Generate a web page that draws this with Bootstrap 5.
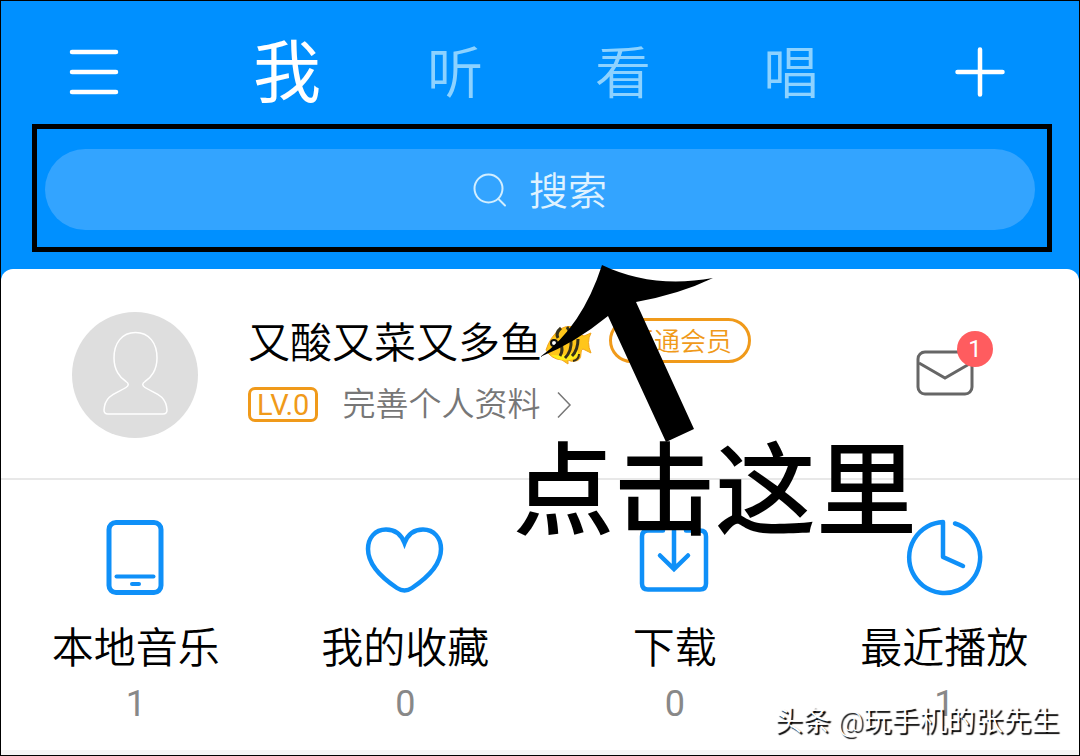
<!DOCTYPE html>
<html lang="zh-CN">
<head>
<meta charset="utf-8">
<meta name="viewport" content="width=device-width, initial-scale=1">
<title>我的音乐</title>
<link href="https://cdn.jsdelivr.net/npm/bootstrap@5.3.0/dist/css/bootstrap.min.css" rel="stylesheet">
<style>
  body { font-family: Roboto, "Noto Sans CJK SC", sans-serif; font-weight: 350; background: #fff; color: #000; }
  a { color: inherit; text-decoration: none; }
  svg { display: block; flex: none; }
  .app { min-height: 100vh; border: 1px solid #000; background: #0090ff; }
  .topbar { height: 123px; padding: 20px 49px 0 43px; }
  .icon-btn { width: 100px; height: 70px; border: 0; background: none; padding: 0; }
  .tabs { padding: 13px 0 0 4px; }
  .tab { width: 168px; line-height: 80px; font-size: 56px; color: #8dd2ff; text-align: center; }
  .tab.on { font-size: 68px; font-weight: 400; color: #fff; }
  .search-frame { margin: 0 27px 0 31px; border: 5px solid #000; padding: 20px 12px 17px 8px; }
  .search-pill { height: 81px; border: 0; border-radius: 41px; background: #33a4ff; color: #dff2ff; font-size: 39px; font-weight: 350; line-height: 1; gap: 22px; }
  .search-pill span { padding-top: 5px; }
  .sheet { margin-top: 17px; border-radius: 12px 12px 0 0; background: #fff; }
  .profile { height: 209px; padding: 2px 105px 0 71px; gap: 50px; }
  .nick { font-size: 42px; line-height: 54px; gap: 3px; margin-top: -6px; }
  .vip { height: 45px; margin: -6px 0 0 13px; padding: 2px 16px 0; border: 3px solid #f09a1a; border-radius: 23px; color: #f09a1a; background: #fff; font-size: 26px; font-weight: 350; line-height: 38px; }
  .level { height: 35px; padding: 0 6px; border: 3px solid #f09a1a; border-radius: 7px; color: #f09a1a; font-size: 29px; font-weight: 400; line-height: 31px; }
  .info { margin-top: 12px; }
  .more { font-size: 33px; line-height: 44px; color: #777; gap: 16px; }
  .mail { margin-top: -4px; }
  .mail-count { top: -19px; left: 41px; width: 36px; height: 36px; border-radius: 50%; background: #ff5c5f; color: #fff; font-size: 24px; font-weight: 400; line-height: 37px; text-align: center; }
  .shelf { border-top: 2px solid #e8e8e8; padding-top: 37px; }
  .shelf-name { font-size: 42px; line-height: 60px; margin-top: 22px; }
  .shelf-num { font-size: 36px; line-height: 50px; color: #888; font-weight: 400; }
  .foot { height: 5px; background: #f5f5f5; }
  .arrow { top: 264px; left: 50%; pointer-events: none; }
  .callout { top: 433px; left: 47.5%; font-size: 101px; font-weight: 500; line-height: 118px; white-space: nowrap; pointer-events: none; }
  .credit { right: 20px; bottom: 14px; font-size: 28px; line-height: 38px; color: #fff; text-shadow: 2px 2px 1px #000; white-space: nowrap; pointer-events: none; }
</style>
</head>
<body>
<div class="app position-relative overflow-hidden d-flex flex-column">
  <header class="topbar d-flex justify-content-between align-items-start">
    <button class="icon-btn mt-3 d-flex align-items-center justify-content-center" aria-label="菜单">
      <svg width="50" height="46" viewBox="0 0 50 46" stroke="#fff" stroke-width="4.500" stroke-linecap="round"><path d="M3 3h44M3 23h44M3 43h44"/></svg>
    </button>
    <nav class="tabs d-flex" aria-label="主导航">
      <a class="tab on" href="#me">我</a><a class="tab" href="#listen">听</a><a class="tab" href="#watch">看</a><a class="tab" href="#sing">唱</a>
    </nav>
    <button class="icon-btn mt-3 d-flex align-items-center justify-content-center" aria-label="添加">
      <svg width="50" height="50" viewBox="0 0 50 50" stroke="#fff" stroke-width="4.500" stroke-linecap="round"><path d="M2.500 25h45M25 2.500v45"/></svg>
    </button>
  </header>

  <div class="search-frame">
    <button class="search-pill w-100 d-flex align-items-center justify-content-center">
      <svg width="34" height="34" viewBox="0 0 34 34" fill="none" stroke="#d2eeff" stroke-width="2" stroke-linecap="round"><circle cx="15.500" cy="15.500" r="14"/><path d="M25.500 26l6.500 6.500"/></svg>
      <span>搜索</span>
    </button>
  </div>

  <main class="sheet flex-grow-1 d-flex flex-column">
    <section class="profile d-flex align-items-center">
      <svg width="126" height="126" viewBox="0 0 126 126" fill="none"><circle cx="63" cy="63" r="63" fill="#dedede"/><path d="M63.500 20.500C50 20.500 42 31 42 46c0 12 6 20 12 23.500 3 2 3 4 0 6C46 81 33 82 32 98c0 3 1 4 4 4h55c3 0 4-1 4-4-1-16-14-17-22-22.500-3-2-3-4 0-6C79 66 85 58 85 46 85 31 77 20.500 63.500 20.500z" stroke="#fff" stroke-width="1.500"/></svg>
      <div class="flex-grow-1">
        <div class="nick d-flex align-items-center">
          <span>又酸又菜又多鱼</span>
          <svg width="48" height="42" viewBox="0 0 48 42"><path d="M1 27Q5 14 15 6 28-1 35 10q2 3 4 3l7-3q-5 9 0 20l-8-4q-2 0-2 4 0 8-6 8-4 1-7-1l0 4-6-4Q6 36 1 27z" fill="#ffc61a" stroke="#f2a51d"/><path d="M6 32q10 8 22 4 6-2 5-8-10 5-27 4z" fill="#ffee1a"/><path d="M16 5q-6 5-3 10M22 4q5 6-1 13M29 5q2 5 0 8M15 19q4 8 0 14M26 17q1 11-6 18M33 16q0 11-6 17" fill="none" stroke="#35301a" stroke-width="3"/><path d="M34 31q0 6-6 7" fill="none" stroke="#35301a" stroke-width="2"/><circle cx="9" cy="20" r="3" fill="#fff" stroke="#111" stroke-width="2"/></svg>
          <button class="vip">开通会员</button>
        </div>
        <div class="info d-flex align-items-center">
          <span class="level">LV.0</span>
          <a class="more d-flex align-items-center ms-4" href="#profile">完善个人资料
            <svg width="16" height="28" viewBox="0 0 16 28" fill="none" stroke="#777" stroke-width="1.500"><path d="M2 1.500l12 12.500L2 26.500"/></svg></a>
        </div>
      </div>
      <a class="mail position-relative" href="#mail" aria-label="消息">
        <svg width="58" height="46" viewBox="0 0 58 46" fill="none" stroke="#666" stroke-width="3"><rect x="2" y="2" width="54" height="42" rx="7"/><path d="M3 13l26 15 26-15"/></svg>
        <span class="mail-count position-absolute">1</span>
      </a>
    </section>

    <section class="shelf row g-0 text-center flex-grow-1">
      <a class="col-3" href="#local">
        <svg class="mx-auto" width="80" height="80" viewBox="0 0 80 80" fill="none" stroke="#0f90f8" stroke-width="5" stroke-linecap="round"><rect x="13" y="5.500" width="52" height="70" rx="7"/><path d="M20.500 59.500h37" stroke-width="4"/><path d="M36 67h7" stroke-width="4"/></svg>
        <div class="shelf-name">本地音乐</div><div class="shelf-num">1</div>
      </a>
      <a class="col-3" href="#liked">
        <svg class="mx-auto" width="80" height="80" viewBox="0 0 80 80" fill="none" stroke="#0f90f8" stroke-width="4.500"><path d="M39.500 26C36 17 29 12.500 21 12.500 10 12.500 3 21 3 32c0 16 14 29 29 39q7.500 5 15 0c15-10 29-23 29-39C76 21 69 12.500 58 12.500 50 12.500 43 17 39.500 26z"/></svg>
        <div class="shelf-name">我的收藏</div><div class="shelf-num">0</div>
      </a>
      <a class="col-3" href="#downloads">
        <svg class="mx-auto" width="80" height="80" viewBox="0 0 80 80" fill="none" stroke="#0f90f8" stroke-width="4.500" stroke-linecap="round"><path d="M28 13.500H13q-6 0-6 6v47q0 6 6 6h52q6 0 6-6v-47q0-6-6-6H51M39 13v39M25 38.500L39 52l14-13.500"/></svg>
        <div class="shelf-name">下载</div><div class="shelf-num">0</div>
      </a>
      <a class="col-3" href="#recent">
        <svg class="mx-auto" width="80" height="80" viewBox="0 0 80 80" fill="none" stroke="#0f90f8" stroke-width="4.500" stroke-linecap="round" stroke-linejoin="round"><path d="M51 6.500A35.500 35.500 0 1 1 39 5v35l20 9"/></svg>
        <div class="shelf-name">最近播放</div><div class="shelf-num">1</div>
      </a>
    </section>
    <div class="foot"></div>
  </main>

  <svg class="arrow position-absolute" width="174" height="178" viewBox="0 0 174 178"><path d="M62 0Q112 24 173 13 140 29 96 37L154 164 126 177 68 51Q35 78 0 92 42 62 62 0z"/></svg>
  <div class="callout position-absolute">点击这里</div>
  <div class="credit position-absolute">头条 @玩手机的张先生</div>
</div>
<script src="https://cdn.jsdelivr.net/npm/bootstrap@5.3.0/dist/js/bootstrap.bundle.min.js"></script>
</body>
</html>
